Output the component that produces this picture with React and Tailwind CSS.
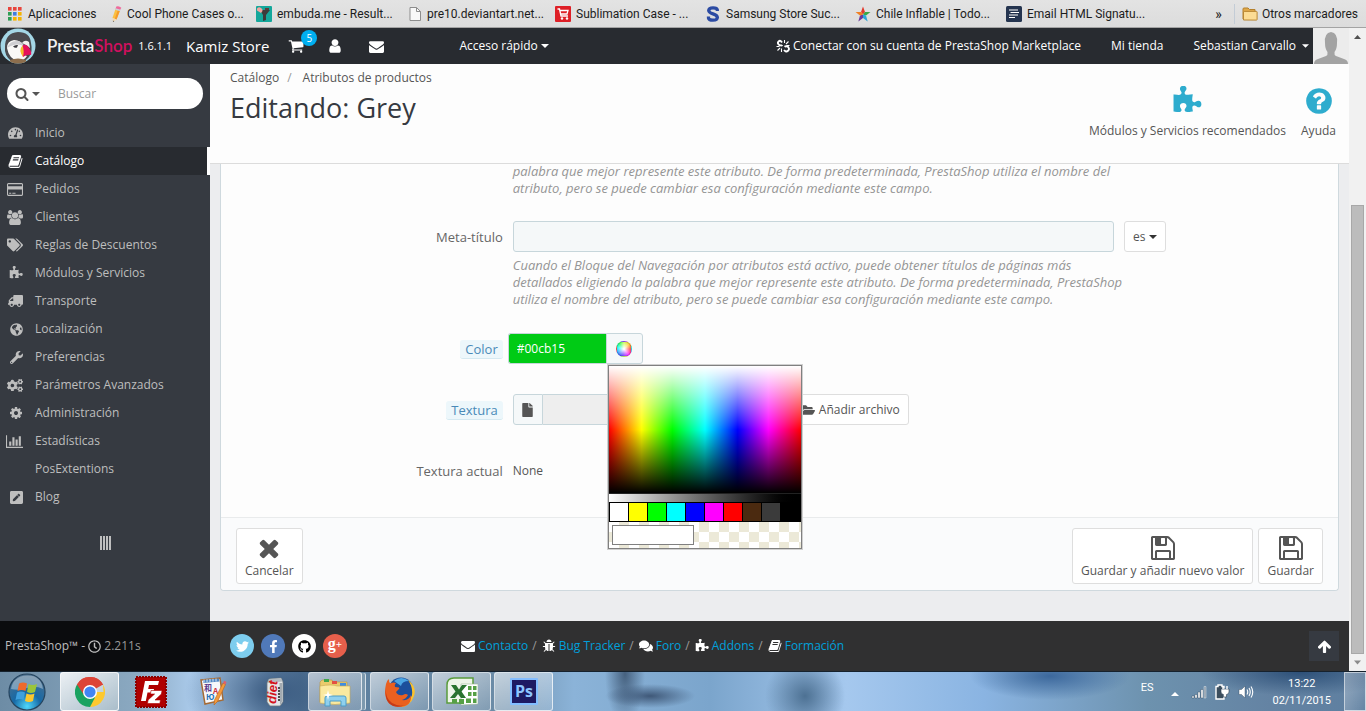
import React, { useState } from "react";
import {
  FaCogs,
  FaComments,
  FaFacebookF,
  FaFile,
  FaFolderOpen,
  FaGithub,
  FaGlobeAmericas,
  FaPenSquare,
  FaRegClock,
  FaTachometerAlt,
  FaTags,
  FaTruck,
  FaTwitter,
  FaWrench,
} from "react-icons/fa";

const glyphs = {
  puzzle: {
    w: 1792,
    d: "M1755 1083q0 81-44.5 135t-123.5 54q-41 0-77.5-17.5t-59-38-56.5-38-71-17.5q-110 0-110 124 0 39 16 115t15 115v5q-22 0-33 1-34 3-97.5 11.5t-115.5 13.5-98 5q-61 0-103-26.5t-42-83.5q0-37 17.5-71t38-56.5 38-59 17.5-77.5q0-79-54-123.5t-135-44.5q-84 0-143 45.5t-59 127.5q0 43 15 83t33.5 64.5 33.5 53 15 50.5q0 45-46 89-37 35-117 35-95 0-245-24-9-2-27.5-4t-27.5-4l-13-2q-1 0-3-1-2 0-2-1v-1024q2 1 17.5 3.5t34 5 21.5 3.5q150 24 245 24 80 0 117-35 46-44 46-89 0-22-15-50.5t-33.5-53-33.5-64.5-15-83q0-82 59-127.5t144-45.5q80 0 134 44.5t54 123.5q0 41-17.5 77.5t-38 59-38 56.5-17.5 71q0 57 42 83.5t103 26.5q64 0 180-15t163-17v2q-1 2-3.5 17.5t-5 34-3.5 21.5q-24 150-24 245 0 80 35 117 44 46 89 46 22 0 50.5-15t53-33.5 64.5-33.5 83-15q82 0 127.5 59t45.5 143z",
  },
  save: {
    w: 1792,
    d: "M512 1536h768v-384h-768v384zm896 0h128v-896q0-14-10-38.5t-20-34.5l-281-281q-10-10-34-20t-39-10v416q0 40-28 68t-68 28h-576q-40 0-68-28t-28-68v-416h-128v1280h128v-416q0-40 28-68t68-28h832q40 0 68 28t28 68v416zm-384-928v-320q0-13-9.5-22.5t-22.5-9.5h-192q-13 0-22.5 9.5t-9.5 22.5v320q0 13 9.5 22.5t22.5 9.5h192q13 0 22.5-9.5t9.5-22.5zm640 32v928q0 40-28 68t-68 28h-1344q-40 0-68-28t-28-68v-1344q0-40 28-68t68-28h928q40 0 88 20t76 48l280 280q28 28 48 76t20 88z",
  },
  chart: {
    w: 2048,
    d: "M640 896v512h-256v-512h256zm384-512v1024h-256v-1024h256zm1024 1152v128h-2048v-1536h128v1408h1920zm-640-896v768h-256v-768h256zm384-384v1152h-256v-1152h256z",
  },
  card: {
    w: 1920,
    d: "M1760 128q66 0 113 47t47 113v1216q0 66-47 113t-113 47h-1600q-66 0-113-47t-47-113v-1216q0-66 47-113t113-47h1600zm-1600 128q-13 0-22.5 9.5t-9.5 22.5v224h1664v-224q0-13-9.5-22.5t-22.5-9.5h-1600zm1600 1280q13 0 22.5-9.5t9.5-22.5v-608h-1664v608q0 13 9.5 22.5t22.5 9.5h1600zm-1504-128v-128h256v128h-256zm384 0v-128h384v128h-384z",
  },
  remove: {
    w: 1792,
    d: "M1490 1322q0 40-28 68l-136 136q-28 28-68 28t-68-28l-294-294-294 294q-28 28-68 28t-68-28l-136-136q-28-28-28-68t28-68l294-294-294-294q-28-28-28-68t28-68l136-136q28-28 68-28t68 28l294 294 294-294q28-28 68-28t68 28l136 136q28 28 28 68t-28 68l-294 294 294 294q28 28 28 68z",
  },
  arrowUp: {
    w: 1792,
    d: "M1675 971q0 51-37 90l-75 75q-38 38-91 38-54 0-90-38l-294-293v704q0 52-37.5 84.5t-90.5 32.5h-128q-53 0-90.5-32.5t-37.5-84.5v-704l-294 293q-36 38-90 38t-90-38l-75-75q-38-38-38-90 0-53 38-91l651-651q35-37 90-37 54 0 91 37l651 651q37 39 37 91z",
  },
  book: {
    w: 1792,
    d: "M1703 478q40 57 18 129l-275 906q-19 64-76.5 107.5t-122.5 43.5h-923q-77 0-148.5-53.5t-99.5-131.5q-24-67-2-127 0-4 3-27t4-37q1-8-3-21.5t-3-19.5q2-11 8-21t16.5-23.5 16.5-23.5q23-38 45-91.5t30-91.5q3-10 .5-30t-.5-28q3-11 17-28t17-23q21-36 42-92t25-90q1-9-2.5-32t.5-28q4-13 22-30.5t22-22.5q19-26 42.5-84.5t27.5-96.5q1-8-3-25.5t-2-26.5q2-8 9-18t18-23 17-21q8-12 16.5-30.5t15-35 16-36 19.5-32 26.5-23.5 36-11.5 47.5 5.5l-1 3q38-9 51-9h761q74 0 114 56t18 130l-274 906q-36 119-71.5 153.5t-128.5 34.5h-869q-27 0-38 15-11 16-1 43 24 70 144 70h923q29 0 56-15.5t35-41.5l300-987q7-22 5-57 38 15 59 43zm-1064 2q-4 13 2 22.5t20 9.5h608q13 0 25.5-9.5t16.5-22.5l21-64q4-13-2-22.5t-20-9.5h-608q-13 0-25.5 9.5t-16.5 22.5zm-83 256q-4 13 2 22.5t20 9.5h608q13 0 25.5-9.5t16.5-22.5l21-64q4-13-2-22.5t-20-9.5h-608q-13 0-25.5 9.5t-16.5 22.5z",
  },
  bug: {
    w: 1792,
    d: "M1696 960q0 26-19 45t-45 19h-224q0 171-67 290l208 209q19 19 19 45t-19 45q-18 19-45 19t-45-19l-198-197q-5 5-15 13t-42 28.5-65 36.5-82 29-97 13v-896h-128v896q-51 0-101.5-13.5t-87-33-66-39-43.5-32.5l-15-14-183 207q-20 21-48 21-24 0-43-16-19-18-20.5-44.5t15.5-46.5l202-227q-58-114-58-274h-224q-26 0-45-19t-19-45 19-45 45-19h224v-294l-173-173q-19-19-19-45t19-45 45-19 45 19l173 173h844l173-173q19-19 45-19t45 19 19 45-19 45l-173 173v294h224q26 0 45 19t19 45zm-480-576h-640q0-133 93.5-226.5t226.5-93.5 226.5 93.5 93.5 226.5z",
  },
  group: {
    w: 1920,
    d: "M593 896q-162 5-265 128h-134q-82 0-138-40.5t-56-118.5q0-353 124-353 6 0 43.5 21t97.5 42.5 119 21.5q67 0 133-23-5 37-5 66 0 159 93 293zm1071 637q0 120-73 189.5t-194 69.5h-874q-121 0-194-69.5t-73-189.5q0-53 3.5-103.5t14-109 26.5-108.5 43-97.5 62-81 85.5-53.5 111.5-20q10 0 43 21.5t73 48 107 48 135 21.5 135-21.5 107-48 73-48 43-21.5q61 0 111.5 20t85.5 53.5 62 81 43 97.5 26.5 108.5 14 109 3.5 103.5zm-1024-1277q0 106-75 181t-181 75-181-75-75-181 75-181 181-75 181 75 75 181zm704 384q0 159-112.5 271.5t-271.5 112.5-271.5-112.5-112.5-271.5 112.5-271.5 271.5-112.5 271.5 112.5 112.5 271.5zm576 225q0 78-56 118.5t-138 40.5h-134q-103-123-265-128 93-134 93-293 0-29-5-66 66 23 133 23 59 0 119-21.5t97.5-42.5 43.5-21q124 0 124 353zm-128-609q0 106-75 181t-181 75-181-75-75-181 75-181 181-75 181 75 75 181z",
  },
  user: {
    w: 1792,
    d: "M1536 1399q0 109-62.5 187t-150.5 78h-854q-88 0-150.5-78t-62.5-187q0-85 8.5-160.5t31.5-152 58.5-131 94-89 134.5-34.5q131 128 313 128t313-128q76 0 134.5 34.5t94 89 58.5 131 31.5 152 8.5 160.5zm-256-887q0 159-112.5 271.5t-271.5 112.5-271.5-112.5-112.5-271.5 112.5-271.5 271.5-112.5 271.5 112.5 112.5 271.5z",
  },
  cart: {
    w: 1792,
    d: "M704 1536q0 52-38 90t-90 38-90-38-38-90 38-90 90-38 90 38 38 90zm896 0q0 52-38 90t-90 38-90-38-38-90 38-90 90-38 90 38 38 90zm128-1088v512q0 24-16.5 42.5t-40.5 21.5l-1044 122q13 60 13 70 0 16-24 64h920q26 0 45 19t19 45-19 45-45 19h-1024q-26 0-45-19t-19-45q0-11 8-31.5t16-36 21.5-40 15.5-29.5l-177-823h-204q-26 0-45-19t-19-45 19-45 45-19h256q16 0 28.5 6.5t19.5 15.5 13 24.5 8 26 5.5 29.5 4.5 26h1201q26 0 45 19t19 45z",
  },
  mail: {
    w: 1792,
    d: "M1792 710v794q0 66-47 113t-113 47h-1472q-66 0-113-47t-47-113v-794q44 49 101 87 362 246 497 345 57 42 92.5 65.5t94.5 48 110 24.5h2q51 0 110-24.5t94.5-48 92.5-65.5q170-123 498-345 57-39 100-87zm0-294q0 79-49 151t-122 123q-376 261-468 325-10 7-42.5 31t-54 38.5-52 32.5-57.5 27-50 9h-2q-23 0-50-9t-57.5-27-52-32.5-54-38.5-42.5-31q-91-64-262-182.5t-205-142.5q-62-42-117-115.5t-55-136.5q0-78 41.5-130t118.5-52h1472q65 0 112.5 47t47.5 113z",
  },
  search: {
    w: 1792,
    d: "M1216 832q0-185-131.5-316.5t-316.5-131.5-316.5 131.5-131.5 316.5 131.5 316.5 316.5 131.5 316.5-131.5 131.5-316.5zm512 832q0 52-38 90t-90 38q-54 0-90-38l-343-342q-179 124-399 124-143 0-273.5-55.5t-225-150-150-225-55.5-273.5 55.5-273.5 150-225 225-150 273.5-55.5 273.5 55.5 225 150 150 225 55.5 273.5q0 220-124 399l343 343q37 37 37 90z",
  },
  help: {
    w: 1792,
    d: "M1024 1376v-192q0-14-9-23t-23-9h-192q-14 0-23 9t-9 23v192q0 14 9 23t23 9h192q14 0 23-9t9-23zm256-672q0-88-55.5-163t-138.5-116-170-41q-243 0-371 213-15 24 8 42l132 100q7 6 19 6 16 0 25-12 53-68 86-92 34-24 86-24 48 0 85.5 26t37.5 59q0 38-20 61t-68 45q-63 28-115.5 86.5t-52.5 125.5v36q0 14 9 23t23 9h192q14 0 23-9t9-23q0-19 21.5-49.5t54.5-49.5q32-18 49-28.5t46-35 44.5-48 28-60.5 12.5-81zm384 192q0 209-103 385.5t-279.5 279.5-385.5 103-385.5-103-279.5-279.5-103-385.5 103-385.5 279.5-279.5 385.5-103 385.5 103 279.5 279.5 103 385.5z",
  },
  cog: {
    w: 1792,
    d: "M1152 896q0-106-75-181t-181-75-181 75-75 181 75 181 181 75 181-75 75-181zm512-109v222q0 12-8 23t-20 13l-185 28q-19 54-39 91 35 50 107 138 10 12 10 25t-9 23q-27 37-99 108t-94 71q-12 0-26-9l-138-108q-44 23-91 38-16 136-29 186-7 28-36 28h-222q-14 0-24.5-8.5t-11.5-21.5l-28-184q-49-16-90-37l-141 107q-10 9-25 9-14 0-25-11-126-114-165-168-7-10-7-23 0-12 8-23 15-21 51-66.5t54-70.5q-27-50-41-99l-183-27q-13-2-21-12.5t-8-23.5v-222q0-12 8-23t19-13l186-28q14-46 39-92-40-57-107-138-10-12-10-24 0-10 9-23 26-36 98.5-107.5t94.5-71.5q13 0 26 10l138 107q44-23 91-38 16-136 29-186 7-28 36-28h222q14 0 24.5 8.5t11.5 21.5l28 184q49 16 90 37l142-107q9-9 24-9 13 0 25 10 129 119 165 170 7 8 7 22 0 12-8 23-15 21-51 66.5t-54 70.5q26 50 41 98l183 28q13 2 21 12.5t8 23.5z",
  },
};

function Glyph({ name, className }) {
  const glyph = glyphs[name];
  return (
    <svg
      viewBox={`0 0 ${glyph.w} 1792`}
      className={`shrink-0 ${className}`}
      fill="currentColor"
      aria-hidden="true"
    >
      <path d={glyph.d} />
    </svg>
  );
}

function Caret({ className = "" }) {
  return (
    <svg viewBox="0 0 8 4" className={`w-2 h-1 shrink-0 ${className}`} fill="currentColor" aria-hidden="true">
      <path d="M0 0h8L4 4z" />
    </svg>
  );
}

/* ---------- Browser bookmarks ---------- */

const appColors = [
  "#e8453c", "#e8453c", "#e8453c",
  "#2f9e55", "#3f7de0", "#f5b400",
  "#2f9e55", "#f5b400", "#f5b400",
];

const bookmarks = [
  {
    label: "Aplicaciones",
    width: "w-[101px]",
    icon: (
      <svg viewBox="0 0 14 14" className="w-[14px] h-[14px] mr-[6px]">
        {appColors.map((color, i) => (
          <rect key={i} x={(i % 3) * 5} y={Math.floor(i / 3) * 5} width="3.6" height="3.6" fill={color} />
        ))}
      </svg>
    ),
  },
  {
    label: "Cool Phone Cases o...",
    width: "w-[147px]",
    icon: (
      <svg viewBox="0 0 16 16" className="w-4 h-4 mr-[2px]">
        <path d="M6.500 3l4.500 1.500-3.500 9L3.500 12z" fill="#fbbf3f" />
        <path d="M9 3.800l2 .7-3.500 9-1.700-.7z" fill="#f59a2a" />
        <path d="M7.300 0.600q2.800-1 5 1.200L11 4.200 6.500 2.800z" fill="#f06a9b" />
        <path d="M6.700 2.200l4.800 1.600-.5 1.500-4.800-1.600z" fill="#c9d1d8" />
        <path d="M3.500 12l4 1.500-3.500 2.500z" fill="#f4d9b0" />
        <path d="M3.900 14.700l1.400.4-1.300.9z" fill="#444" />
      </svg>
    ),
  },
  {
    label: "embuda.me - Result...",
    width: "w-[151px]",
    icon: (
      <svg viewBox="0 0 16 16" className="w-4 h-4 mr-[5px]">
        <rect width="16" height="16" rx="1" fill="#14a79b" />
        <path d="M4 4h10l-4 5v5l-3 1v-6z" fill="#3d3a3a" />
        <path d="M1 2.500q2-2 4-.5 2 1 1.500 3L5 7 1 4.500z" fill="#f2a5a0" />
        <path d="M9 2h4v2H9z" fill="#5b3f3c" />
      </svg>
    ),
  },
  {
    label: "pre10.deviantart.net...",
    width: "w-[148px]",
    icon: (
      <svg viewBox="0 0 12 14" className="w-3 h-[14px] mr-[6px] ml-[2px]">
        <path d="M1 .5h6.500l4 4v9H1z" fill="#f8f8f8" stroke="#8d8d8d" />
        <path d="M7.500.5v4h4" fill="none" stroke="#8d8d8d" />
      </svg>
    ),
  },
  {
    label: "Sublimation Case - ...",
    width: "w-[151px]",
    icon: (
      <svg viewBox="0 0 16 16" className="w-4 h-4 mr-[5px]">
        <rect width="16" height="16" rx="1" fill="#de1f26" />
        <path d="M2.500 3h2l1.500 7h7M5 4.500h8L12 8H6" fill="none" stroke="#fff" strokeWidth="1.300" />
        <circle cx="7" cy="12.500" r="1.200" fill="#fff" />
        <circle cx="12" cy="12.500" r="1.200" fill="#fff" />
      </svg>
    ),
  },
  {
    label: "Samsung Store Suc...",
    width: "w-[149px]",
    icon: (
      <svg viewBox="0 0 14 16" className="w-[14px] h-4 mr-[6px]">
        <path
          d="M11.300 5V3.800Q11 1.800 7 1.800T2.700 4.500Q2.800 6.500 7 7.800T11.400 11.500Q11.200 14.200 7 14.200T2.500 12V10.500"
          fill="none"
          stroke="#2c4ba3"
          strokeWidth="3.300"
        />
      </svg>
    ),
  },
  {
    label: "Chile Inflable | Todo...",
    width: "w-[151px]",
    icon: (
      <svg viewBox="0 0 16 16" className="w-4 h-4 mr-[5px]">
        <path d="M8 8.500L6 6 8 .5 10 6z" fill="#e23b2e" />
        <path d="M8 8.500L10 6H15.500L11 9.500z" fill="#39a94a" />
        <path d="M8 8.500l3 1 1.700 6L8 12z" fill="#2aa7d8" />
        <path d="M8 8.500V12l-4.700 3.500 1.700-6z" fill="#6a3a9b" />
        <path d="M8 8.500L5 9.500.5 6H6z" fill="#f07f23" />
      </svg>
    ),
  },
  {
    label: "Email HTML Signatu...",
    width: "w-[150px]",
    icon: (
      <svg viewBox="0 0 16 16" className="w-4 h-4 mr-[5px]">
        <rect width="16" height="16" rx="1.500" fill="#24344f" />
        <path d="M3 4h9M4.500 6.500h8.500M3 9h9M3 11.500h6" stroke="#fff" strokeWidth="1.200" />
      </svg>
    ),
  },
];

function BookmarksBar() {
  return (
    <nav
      aria-label="Marcadores"
      className="h-7 shrink-0 flex items-center bg-linear-to-b from-[#e3e3e3] to-[#dcdcdc] border-b border-[#a3a3a3] pl-2 pr-2 text-[12px] text-[#1c1c1c] font-[Roboto,sans-serif] whitespace-nowrap overflow-hidden"
    >
      {bookmarks.map((item) => (
        <a key={item.label} href="#" className={`flex items-center shrink-0 ${item.width}`}>
          {item.icon}
          {item.label}
        </a>
      ))}
      <button aria-label="Más marcadores" className="ml-auto px-3 text-[14px] leading-none">
        »
      </button>
      <a href="#" className="flex items-center gap-1 border-l border-[#c3ccd6] pl-[7px] h-5">
        <svg viewBox="0 0 16 14" className="w-4 h-[14px]">
          <path d="M1 12V2q0-1 1-1h4l1.500 1.500H13V12z" fill="#e0a94a" stroke="#b4802c" />
          <path d="M1.500 13V5q0-.6.6-.6H14.500q.6 0 .6.600v7.500q0 .6-.6.600z" fill="#fcdc94" stroke="#b98733" />
        </svg>
        Otros marcadores
      </a>
    </nav>
  );
}

/* ---------- PrestaShop header ---------- */

function Puffin() {
  return (
    <svg viewBox="0 0 36 36" className="w-9 h-9 shrink-0">
      <defs>
        <clipPath id="puffin">
          <circle cx="18" cy="18" r="17.500" />
        </clipPath>
      </defs>
      <circle cx="18" cy="18" r="17.500" fill="#a4d7e6" />
      <g clipPath="url(#puffin)">
        <path d="M5 19Q5 5 18 4q12 0 13 11 2 9-2 14l-4 4H11Q4 27 5 19z" fill="#4b4b4f" />
        <path d="M7 20q0-7 7-8 7 0 9 6l-1 8 5 2q-3 5-9 5-9-2-11-13z" fill="#faf9f7" />
        <path d="M22 15q3-4 7-1l1 6-4-3z" fill="#f3f1ee" />
        <path d="M7 20q3-8 11-7 5 1 6 5-8-4-17 2z" fill="#cfcfd2" />
        <path d="M13 18.500q2-2 5-1.500l-1 2.500q-2 1-4-1z" fill="#3b3b3f" />
        <path d="M23 17q4-1 6 3 3 4 2 7-4-1-8 2-3-6 0-12z" fill="#e5115b" />
        <path d="M22.500 17.500q2 5 .5 11-5-6-.5-11z" fill="#f4bd2a" />
        <path d="M10 32q8-3 16 0v4H10z" fill="#8d6e4d" />
      </g>
    </svg>
  );
}

function TopBar() {
  return (
    <header className="h-9 shrink-0 flex items-center bg-[#282b30] text-white text-[12px] whitespace-nowrap">
      <a href="#" className="flex items-center">
        <Puffin />
        <span className="ml-[11px] text-[17px] leading-5 font-[Lato,sans-serif] font-semibold text-[#f2f2f2]">
          Presta<span className="text-[#d0105f]">Shop</span>
        </span>
        <span className="ml-[6px] text-[11px]">1.6.1.1</span>
      </a>
      <a href="#" className="ml-[14px] text-[15px] leading-5">
        Kamiz Store
      </a>
      <button aria-label="Pedidos" className="relative ml-[19px]">
        <Glyph name="cart" className="w-4 h-4" />
        <span className="absolute -top-2 left-[13px] w-4 h-4 rounded-full bg-[#00aff0] text-[10px] leading-4 text-center">
          5
        </span>
      </button>
      <button aria-label="Clientes" className="ml-[23px]">
        <Glyph name="user" className="w-4 h-4" />
      </button>
      <button aria-label="Mensajes" className="ml-[26px]">
        <Glyph name="mail" className="w-[15px] h-[15px]" />
      </button>
      <button className="ml-[75px] flex items-center gap-[3px]">
        Acceso rápido <Caret />
      </button>

      <nav className="ml-auto flex items-center h-full">
        <a href="#" className="flex items-center gap-[3px]">
          <svg viewBox="0 0 14 14" className="w-[14px] h-[14px]" fill="none" stroke="#fff">
            <path
              d="M6 3.500Q4.500.8 2.600 2.400T3.600 6.200Q5.600 7 6.400 6M8 11q2 2.500 4 .8t0-4q-2-1.200-3.500 0"
              strokeWidth="1.900"
            />
            <path d="M8.500 4V1M10 5l2.500-2.500M10.500 6.500h3M5.500 9.500v3.500M4 9L1.500 11.500M3.500 7.500H.5" strokeWidth="1.100" />
          </svg>
          Conectar con su cuenta de PrestaShop Marketplace
        </a>
        <a href="#" className="ml-[30px]">
          Mi tienda
        </a>
        <button className="ml-[30px] mr-1 flex items-center gap-[6px]">
          Sebastian Carvallo <Caret className="w-[7px]" />
        </button>
        <svg viewBox="0 0 36 36" className="w-9 h-9">
          <rect width="36" height="36" fill="#ececec" />
          <path
            d="M1 36q0-4 4-5l8-3q2-1 1.500-4Q12 21 12 15q-1-10 6-11 7 1 6 11 0 6-2.500 9-.5 3 1.500 4l8 3q4 1 4 5z"
            fill="#a3a3a3"
          />
        </svg>
      </nav>
    </header>
  );
}

/* ---------- Sidebar ---------- */

const menu = [
  { label: "Inicio", icon: <FaTachometerAlt className="w-[15px] h-[14px]" /> },
  { label: "Catálogo", icon: <Glyph name="book" className="w-[15px] h-[15px]" />, active: true },
  { label: "Pedidos", icon: <Glyph name="card" className="w-4 h-[15px]" /> },
  { label: "Clientes", icon: <Glyph name="group" className="w-4 h-[15px]" /> },
  { label: "Reglas de Descuentos", icon: <FaTags className="w-4 h-4" /> },
  { label: "Módulos y Servicios", icon: <Glyph name="puzzle" className="w-[14px] h-[14px]" /> },
  { label: "Transporte", icon: <FaTruck className="w-[15px] h-[14px] -scale-x-100" /> },
  { label: "Localización", icon: <FaGlobeAmericas className="w-[13px] h-[13px]" /> },
  { label: "Preferencias", icon: <FaWrench className="w-[13px] h-[13px]" /> },
  { label: "Parámetros Avanzados", icon: <FaCogs className="w-4 h-[15px]" /> },
  { label: "Administración", icon: <Glyph name="cog" className="w-[14px] h-[14px]" /> },
  { label: "Estadísticas", icon: <Glyph name="chart" className="w-[17px] h-[15px]" /> },
  { label: "PosExtentions", icon: null },
  { label: "Blog", icon: <FaPenSquare className="w-[13px] h-[15px]" /> },
];

function Sidebar() {
  return (
    <aside className="w-[210px] shrink-0 flex flex-col bg-[#363a41] text-[#bebebe] text-[12px]">
      <form className="mx-[7px] mt-[14px] mb-[10px] h-[31px] flex items-center rounded-full bg-white text-[#555]">
        <button type="button" aria-label="Buscar en" className="flex items-center gap-[3px] ml-2">
          <Glyph name="search" className="w-[14px] h-[14px]" />
          <Caret />
        </button>
        <input
          aria-label="Buscar"
          placeholder="Buscar"
          className="ml-[18px] w-[130px] bg-transparent outline-none placeholder:text-[#999]"
        />
      </form>
      <nav>
        <ul>
          {menu.map((item) => (
            <li key={item.label}>
              <a
                href="#"
                className={`h-7 flex items-center ${
                  item.active ? "bg-[#282b30] text-white border-r-[3px] border-white" : ""
                }`}
              >
                <span className="w-[23px] flex justify-end mr-3">{item.icon}</span>
                {item.label}
              </a>
            </li>
          ))}
        </ul>
      </nav>
      <button aria-label="Contraer menú" className="mt-[25px] mx-auto flex gap-px">
        {[0, 1, 2, 3].map((bar) => (
          <span key={bar} className="w-[2px] h-[14px] bg-[#bebebe]" />
        ))}
      </button>
      <div className="mt-auto h-[50px] flex items-center pl-[5px] bg-[#0b0c0e]">
        PrestaShop™ -&nbsp;
        <FaRegClock className="w-[13px] h-[13px] mr-[3px]" />
        <span className="text-[#999]">2.211s</span>
      </div>
    </aside>
  );
}

/* ---------- Page heading ---------- */

function PageHead() {
  return (
    <div className="h-[100px] shrink-0 flex justify-between bg-[#fdfdfd] border-b border-[#dcdcdc] pl-5 pr-[13px]">
      <div>
        <ol className="flex pt-[5px] text-[12px] leading-[17px] text-[#555]">
          <li>
            <a href="#">Catálogo</a>
            <span className="mx-2 text-[#999]">/</span>
          </li>
          <li>
            <a href="#" className="ml-[3px]">Atributos de productos</a>
          </li>
        </ol>
        <h1 className="mt-[4px] text-[27px] leading-9 text-[#363a41]">Editando: Grey</h1>
      </div>
      <div className="flex gap-[15px] pt-[22px] text-[12px] text-[#555]">
        <a href="#" className="flex flex-col items-center gap-[6px]">
          <Glyph name="puzzle" className="w-[30px] h-[30px] text-[#2eacce]" />
          Módulos y Servicios recomendados
        </a>
        <a href="#" className="flex flex-col items-center gap-[6px]">
          <Glyph name="help" className="w-[30px] h-[30px] text-[#2eacce]" />
          Ayuda
        </a>
      </div>
    </div>
  );
}

/* ---------- Form ---------- */

const swatches = [
  "#ffffff", "#ffff00", "#00ff00", "#00ffff", "#0000ff",
  "#ff00ff", "#ff0000", "#4b2a10", "#3b3b3b", "#000000",
];

function ColorPicker() {
  return (
    <div className="absolute left-[100px] top-8 z-10 w-[194px] border border-[#808080] shadow-[0_0_0_1px_#d0d0d0] bg-white">
      <div className="h-[127px] bg-[linear-gradient(to_bottom,#fff_0%,transparent_50%,#000_100%),linear-gradient(to_right,#f00_0%,#ff0_17%,#0f0_33%,#0ff_50%,#00f_67%,#f0f_83%,#f00_100%)]" />
      <div className="h-[9px] border-t border-[#222] bg-linear-to-r from-white to-black" />
      <div className="flex bg-black p-px h-5">
        {swatches.map((color) => (
          <button
            key={color}
            type="button"
            aria-label={color}
            className="flex-1 border-r border-black"
            style={{ backgroundColor: color }}
          />
        ))}
      </div>
      <div className="h-[26px] pt-[3px] pl-[3px] bg-[repeating-conic-gradient(#ece9d8_0_25%,#fff_0_50%)] bg-size-[20px_20px]">
        <input
          aria-label="Color seleccionado"
          className="block w-[82px] h-5 border border-[#808080] bg-white"
        />
      </div>
    </div>
  );
}

function FormRow({ label, htmlFor, hint, className, children }) {
  return (
    <div className={`flex ${className}`}>
      <div className="w-1/4 shrink-0 pr-[5px] pt-[2px] h-[31px] flex items-center justify-end text-[13px] text-[#666]">
        <label
          htmlFor={htmlFor}
          className={
            hint ? "px-[5px] leading-[18px] rounded-[3px] bg-[#edf7fb] border-b border-[#d5e9f1] text-[#4a8ab8]" : ""
          }
        >
          {label}
        </label>
      </div>
      <div className="w-3/4">{children}</div>
    </div>
  );
}

function Help({ lines }) {
  return (
    <p className="italic text-[13px] leading-[17px] text-[#959595] whitespace-nowrap">
      {lines.map((line) => (
        <span key={line} className="block">
          {line}
        </span>
      ))}
    </p>
  );
}

function FooterButton({ icon, label }) {
  return (
    <button
      type="button"
      className="h-14 px-2 pb-[3px] flex flex-col items-center justify-end rounded-[3px] border border-[#dedede] bg-white text-[12px] leading-[18px]"
    >
      <Glyph name={icon} className="w-7 h-7" />
      {label}
    </button>
  );
}

function AttributeForm() {
  const [color, setColor] = useState("#00cb15");

  return (
    <form className="mx-[10px] border-x border-b border-[#cfd9de] rounded-b-[4px] bg-[#fdfdfd] text-[#555]">
      <div className="px-[15px] pb-[31px]">
        <div className="flex -mt-px">
          <div className="w-1/4" />
          <div className="w-3/4 pl-[5px]">
            <Help
              lines={[
                "palabra que mejor represente este atributo. De forma predeterminada, PrestaShop utiliza el nombre del",
                "atributo, pero se puede cambiar esa configuración mediante este campo.",
              ]}
            />
          </div>
        </div>

        <FormRow label="Meta-título" htmlFor="meta" className="mt-6">
          <div className="flex">
            <div className="w-3/4 pl-[5px] pr-[5px]">
              <input
                id="meta"
                className="block w-full h-[31px] rounded-[3px] border border-[#c7d6db] bg-[#f5f8f9] px-2 text-[12px]"
              />
            </div>
            <button
              type="button"
              className="ml-[5px] h-[31px] w-[42px] flex items-center justify-center gap-1 rounded-[3px] border border-[#dedede] bg-white text-[12px]"
            >
              es <Caret className="text-[#333]" />
            </button>
          </div>
          <div className="pl-[5px] mt-[5px]">
            <Help
              lines={[
                "Cuando el Bloque del Navegación por atributos está activo, puede obtener títulos de páginas más",
                "detallados eligiendo la palabra que mejor represente este atributo. De forma predeterminada, PrestaShop",
                "utiliza el nombre del atributo, pero se puede cambiar esa configuración mediante este campo.",
              ]}
            />
          </div>
        </FormRow>

        <FormRow label="Color" htmlFor="color" hint className="mt-[25px]">
          <div className="relative flex w-[135px] h-[31px]">
            <input
              id="color"
              value={color}
              onChange={(e) => setColor(e.target.value)}
              style={{ backgroundColor: color }}
              className="w-[98px] rounded-l-[3px] border border-r-0 border-[#c7d6db] pl-2 text-[12px] text-white"
            />
            <button
              type="button"
              aria-label="Elegir color"
              className="flex-1 flex items-center justify-center rounded-r-[3px] border border-[#c7d6db] bg-[#f5f8f9]"
            >
              <span className="w-4 h-4 rounded-full border border-black/15 bg-[radial-gradient(circle,#fff_5%,transparent_75%),conic-gradient(from_0deg,#cf5,#fc3_45deg,#f33_90deg,#f3f_140deg,#63f_190deg,#39f_240deg,#0ff_280deg,#3f6_320deg,#cf5)]" />
            </button>
            <ColorPicker />
          </div>
        </FormRow>

        <FormRow label="Textura" htmlFor="texture" hint className="mt-[30px]">
          <div className="ml-[5px] flex w-[396px] h-[31px]">
            <span className="w-[30px] flex items-center justify-center rounded-l-[3px] border border-[#c7d6db] bg-[#f5f8f9]">
              <FaFile className="w-[13px] h-[14px]" />
            </span>
            <input
              id="texture"
              readOnly
              className="flex-1 min-w-0 border-y border-[#c7d6db] bg-[#eee] px-2 text-[12px]"
            />
            <button
              type="button"
              className="w-[116px] flex items-center justify-end gap-1 pr-2 rounded-r-[3px] border border-[#dedede] bg-white text-[12px]"
            >
              <FaFolderOpen className="w-[14px] h-[14px]" />
              Añadir archivo
            </button>
          </div>
        </FormRow>

        <FormRow label="Textura actual" className="mt-[30px]">
          <p className="pl-[5px] text-[12px] leading-[31px]">None</p>
        </FormRow>
      </div>

      <div className="flex items-start gap-[5px] border-t border-[#e9ebec] bg-[#fafbfc] rounded-b-[4px] pt-[10px] pb-[6px] px-[15px]">
        <FooterButton icon="remove" label="Cancelar" />
        <div className="ml-auto" />
        <FooterButton icon="save" label="Guardar y añadir nuevo valor" />
        <FooterButton icon="save" label="Guardar" />
      </div>
    </form>
  );
}

/* ---------- Footer ---------- */

const footerLinks = [
  { label: "Contacto", icon: <Glyph name="mail" className="w-[14px] h-[14px]" /> },
  { label: "Bug Tracker", icon: <Glyph name="bug" className="w-[14px] h-[14px]" /> },
  { label: "Foro", icon: <FaComments className="w-[14px] h-[14px]" /> },
  { label: "Addons", icon: <Glyph name="puzzle" className="w-[14px] h-[14px]" /> },
  { label: "Formación", icon: <Glyph name="book" className="w-[14px] h-[14px]" /> },
];

function Footer() {
  return (
    <footer className="mt-auto h-[50px] shrink-0 flex items-center bg-[#303031] pl-5 pr-[10px] text-[12px] text-[#999] whitespace-nowrap">
      <div className="flex gap-[7px]">
        <a href="#" aria-label="Twitter" className="w-6 h-6 rounded-full flex items-center justify-center bg-[#7dcdee] text-white">
          <FaTwitter className="w-[13px] h-[13px]" />
        </a>
        <a href="#" aria-label="Facebook" className="w-6 h-6 rounded-full flex items-center justify-center bg-[#5079b9] text-white">
          <FaFacebookF className="w-[13px] h-[13px]" />
        </a>
        <a href="#" aria-label="GitHub" className="w-6 h-6 rounded-full flex items-center justify-center bg-white text-black">
          <FaGithub className="w-[13px] h-[13px]" />
        </a>
        <a
          href="#"
          aria-label="Google Plus"
          className="w-6 h-6 rounded-full flex items-center justify-center bg-[#e65f4b] text-white font-['Liberation_Serif',serif] font-bold text-[16px] leading-none pb-1"
        >
          g<span className="text-[11px]">+</span>
        </a>
      </div>
      <ul className="ml-[114px] flex">
        {footerLinks.map((link, index) => (
          <li key={link.label} className="flex items-center">
            <span className="text-white mr-[3px]">{link.icon}</span>
            <a href="#" className="text-[#00a0dc]">
              {link.label}
            </a>
            {index < footerLinks.length - 1 && <span className="ml-1 mr-[5px]">/</span>}
          </li>
        ))}
      </ul>
      <button aria-label="Volver arriba" className="ml-auto w-[30px] h-[30px] flex items-center justify-center bg-[#363a41] text-white">
        <Glyph name="arrowUp" className="w-[15px] h-[15px]" />
      </button>
    </footer>
  );
}

function Scrollbar() {
  return (
    <div className="w-[17px] shrink-0 flex flex-col items-center bg-[#f1f1f1]">
      <svg viewBox="0 0 17 17" className="w-[17px] h-[17px]">
        <path d="M5 11h7L8.500 7z" fill="#505050" />
      </svg>
      <div className="flex-1 w-full flex flex-col px-[2px]">
        <div className="flex-1" />
        <div className="basis-[73.7%] border border-[#a8a8a8] bg-[#bcbcbc]" />
      </div>
      <svg viewBox="0 0 17 17" className="w-[17px] h-[17px]">
        <path d="M5 6.500h7L8.500 10.500z" fill="#8b8b8b" />
      </svg>
    </div>
  );
}

/* ---------- Windows taskbar ---------- */

function StartOrb() {
  return (
    <svg viewBox="0 0 40 40" className="w-10 h-10">
      <defs>
        <radialGradient id="orb" cx="50%" cy="90%" r="85%">
          <stop offset="0" stopColor="#4fd8fb" />
          <stop offset=".45" stopColor="#1769a6" />
          <stop offset="1" stopColor="#4b6f8e" />
        </radialGradient>
      </defs>
      <circle cx="20" cy="20" r="18" fill="url(#orb)" stroke="#26445e" strokeWidth="1.200" />
      <path d="M4 17Q6 4 20 3.500T36 17q-8-4-16-1T4 17z" fill="#fff" opacity=".35" />
      <path d="M12 11.500q4-2 8 0L18.500 19q-4-2-8 0z" fill="#ee6a2c" />
      <path d="M21.500 12q4 2 8.500 0L28 20q-4 2-8 0z" fill="#9bc53b" />
      <path d="M10 20.500q4-2 8 0L16.500 28q-4-2-8 0z" fill="#3fa0de" />
      <path d="M19.500 21.500q4 2 8 0L26 29q-4 2-8 0z" fill="#fbc72f" />
    </svg>
  );
}

function ChromeIcon() {
  return (
    <svg viewBox="0 0 30 30" className="w-[30px] h-[30px]">
      <path d="M15 15L2 7.500A15 15 0 0 1 28 7.500z" fill="#dc4437" />
      <path d="M15 15H28.500L28 7.500A15 15 0 0 1 15 30z" fill="#fdc92f" />
      <path d="M15 15L20 20.500 15 30A15 15 0 0 1 2 7.500z" fill="#1aa260" />
      <path d="M15 8H28.200A15 15 0 0 0 2 7.500L9 18z" fill="#dc4437" />
      <circle cx="15" cy="15" r="7" fill="#fff" />
      <circle cx="15" cy="15" r="5.600" fill="#4285f4" />
    </svg>
  );
}

function FileZillaIcon() {
  return (
    <svg viewBox="0 0 32 32" className="w-8 h-8">
      <rect x="1" y="1" width="30" height="30" fill="#b00000" stroke="#8c0000" strokeDasharray="2 1" strokeWidth="2" />
      <path d="M6 25L10 5H24L23 9H14L13.200 13H19L18.300 16.500H12.500L10.800 25z" fill="#fff" />
      <path d="M16 14.500h11l-.6 3.500-6.400 6h5.500l-.7 3.500H12.500l.6-3.500 6.500-6H15.500z" fill="#fff" stroke="#b00000" strokeWidth=".6" />
    </svg>
  );
}

function NotesIcon() {
  return (
    <svg viewBox="0 0 28 32" className="w-7 h-8">
      <path d="M2 4l19-2 3 22-18 4z" fill="#f6f8fb" stroke="#a56b35" strokeWidth="1.500" />
      <path d="M4 4l16-1.500.4 3L4.400 7z" fill="#4f87c4" />
      <path d="M5 3.500v3M8 3.200v3M11 3v3M14 2.700v3M17 2.500v3" stroke="#fff" strokeWidth=".8" />
      <g fontFamily="Noto Sans CJK JP, sans-serif" fontWeight="700">
        <text x="5" y="15" fontSize="8" fill="#5a3a8c">和</text>
        <text x="7" y="24" fontSize="8" fill="#2472b8">Ю</text>
        <text x="14" y="18" fontSize="8" fill="#cc3344">A</text>
      </g>
      <path d="M24 7l2.500 1.500-8 17-3.500 3.500.5-5z" fill="#f39a3c" stroke="#b8621b" strokeWidth=".6" />
      <path d="M24 7l2.500 1.500 1-2.500-2.200-1.200z" fill="#e2606a" />
    </svg>
  );
}

function SodaIcon() {
  return (
    <svg viewBox="0 0 20 30" className="w-5 h-[30px]">
      <path d="M4 2l12-1 2 4v20l-3 4H5l-3-4V6z" fill="#e4e6e8" stroke="#6d7880" strokeWidth=".8" />
      <path d="M4 2l12-1 1.500 3.500L2.500 6z" fill="#b3bac0" />
      <path d="M14.500 6H17v19l-2 3z" fill="#a2aab1" />
      <text transform="translate(11 27) rotate(-86)" fontSize="13" fontWeight="700" fontStyle="italic" fontFamily="Liberation Sans, sans-serif" fill="#d3141c">
        diet
      </text>
      <path d="M14 10v15" stroke="#3c3c3c" strokeWidth="1.800" strokeDasharray="2 1" />
    </svg>
  );
}

function ExplorerIcon() {
  return (
    <svg viewBox="0 0 32 30" className="w-8 h-[30px]">
      <path d="M3 3h10l1 2h14v20H1V5z" fill="#e9cb6c" stroke="#b9953e" strokeWidth=".6" />
      <path d="M5 2h5v3H5z" fill="#3fa64b" />
      <path d="M13 4h5v3h-5z" fill="#e44f42" />
      <path d="M21 6h6v3h-6z" fill="#3f8ce0" />
      <path d="M1 9q12-2 17 0h13v17q-15 3-30 0z" fill="#fae9a0" stroke="#c8a750" strokeWidth=".6" />
      <path d="M6 29V21q0-2 2-2h17q2 0 2 2v8h-5v-5H11v5z" fill="#8fd0ee" stroke="#4c9cc7" />
      <path d="M9 13l1 4 4 1-4 1-1 4-1-4-4-1 4-1z" fill="#fff" />
    </svg>
  );
}

function FirefoxIcon() {
  return (
    <svg viewBox="0 0 32 32" className="w-8 h-8">
      <circle cx="17" cy="14" r="12.500" fill="#1c4f9c" />
      <path d="M10 5q7-6 15 0-7 0-8 5z" fill="#4ba5e4" />
      <path d="M24 4q9 7 6 16-4 11-14 11 10-3 12-12 1-8-4-15z" fill="#fbc22d" />
      <path d="M2 8q1-4 3-5-.5 3 1.500 4.500Q9 6 12 7q-2 2-1 4l4 .5q1 1-1 2.500l-2 2q2 4 7 3 3-2 5 0-2 4-6 5 7 1 9-5 1 12-12 12Q2 30 1 17q0-5 1-9z" fill="#ea6020" />
      <path d="M2 12q-1 10 6 15 7 4 13 2-6 3-12 1Q0 26 2 12z" fill="#c63a17" />
    </svg>
  );
}

function ExcelIcon() {
  return (
    <svg viewBox="0 0 32 30" className="w-8 h-[30px]">
      <path d="M1 26V8q0-7 7-7h19v25z" fill="#eef5e9" stroke="#5a9c3c" strokeWidth="1.500" />
      <path d="M15 7h17v20l-17 1z" fill="#fff" stroke="#9cb594" strokeWidth=".6" />
      <path d="M22 9h3.500v4H22zM27 9h3.500v4H27zM22 15h3.500v4H22zM27 15h3.500v4H27zM6 22h5v4H6zM13 22h5v5h-5zM20 21.500h5V26h-5zM27 21.500h3.500V26H27z" fill="#55a044" />
      <path d="M5 8h5l3 4.500L16 8h5l-5.500 6.500L20 21h-5l-3-4-3 4H4l5.500-6.500z" fill="#2a7330" />
    </svg>
  );
}

function PhotoshopIcon() {
  return (
    <svg viewBox="0 0 28 27" className="w-7 h-[27px]">
      <rect width="28" height="27" rx="1" fill="#82bdff" />
      <rect x="2" y="2" width="24" height="23" fill="#1d1a63" />
      <text x="14" y="19" textAnchor="middle" fontSize="16" fontWeight="700" fontFamily="Open Sans, sans-serif" fill="#8cc4ff">
        Ps
      </text>
    </svg>
  );
}

const tasks = [
  { label: "Chrome", icon: <ChromeIcon />, style: "w-[59px] ml-[13px] border border-white/80 bg-linear-to-br from-white/85 to-[#a9bdca]" },
  { label: "FileZilla", icon: <FileZillaIcon />, style: "w-[62px] ml-[1px]" },
  { label: "Notas", icon: <NotesIcon />, style: "w-[62px]" },
  { label: "Diet", icon: <SodaIcon />, style: "w-[62px]" },
  {
    label: "Explorador",
    icon: <ExplorerIcon />,
    style: "w-[54px] ml-[2px] border border-white/60 bg-linear-to-br from-white/60 to-white/20 shadow-[4px_0_0_-1px_#7d99ae,5px_0_0_-1px_#d5e0e8]",
  },
  { label: "Firefox", icon: <FirefoxIcon />, style: "w-[59px] ml-2 border border-white/60 bg-linear-to-br from-white/60 to-white/15" },
  { label: "Excel", icon: <ExcelIcon />, style: "w-[59px] ml-[3px] border border-white/60 bg-linear-to-br from-white/60 to-white/15" },
  { label: "Photoshop", icon: <PhotoshopIcon />, style: "w-[59px] ml-[3px] border border-white/60 bg-linear-to-br from-white/60 to-white/15" },
];

function Taskbar() {
  return (
    <div className="h-10 shrink-0 flex items-stretch border-t border-[#16222e] text-white bg-[radial-gradient(ellipse_45px_12px_at_650px_24px,#3f5878,transparent),radial-gradient(ellipse_20px_50px_at_625px_2px,#46617f,transparent),radial-gradient(ellipse_40px_40px_at_805px_24px,#4d7193,transparent),radial-gradient(ellipse_90px_60px_at_275px_20px,#39597f,transparent),radial-gradient(ellipse_80px_24px_at_1050px_4px,#3c689c,transparent),radial-gradient(ellipse_100px_24px_at_1300px_0px,#2d5078,transparent),linear-gradient(to_right,#6d8ca5,#8ba9c1_10%,#a9c9e9_14%,#a3c4e4_18%,#5a7d9d_22%,#6b8ba6_36%,#8bb3d8_42%,#7ba5cc_52%,#a5c8ee_62%,#8ab4e2_72%,#6d92ae_84%,#6483a3_93%,#5e7fa0)] overflow-hidden">
      <button aria-label="Inicio" className="ml-[7px] flex items-center">
        <StartOrb />
      </button>
      {tasks.map((task) => (
        <button
          key={task.label}
          aria-label={task.label}
          className={`h-[39px] shrink-0 flex items-center justify-center rounded-[3px] ${task.style}`}
        >
          {task.icon}
        </button>
      ))}
      <div className="ml-auto flex items-center text-[11px] font-[Roboto,sans-serif]">
        <span className="mr-[18px] pb-[6px]">ES</span>
        <svg viewBox="0 0 8 4" className="w-2 h-1 mr-3 mt-1">
          <path d="M0 4h8L4 0z" fill="#fff" />
        </svg>
        <svg viewBox="0 0 16 14" className="w-4 h-[14px] mr-2">
          <path d="M1 11h2v2H1zM4 9.500h2V13H4zM7 7h2v6H7zM10 4.500h2V13h-2z" fill="#fff" stroke="#2e4256" strokeWidth=".4" />
          <path d="M13 1.500h2V13h-2z" fill="#8a99a8" stroke="#dde4ea" strokeWidth=".5" />
        </svg>
        <svg viewBox="0 0 15 16" className="w-[15px] h-4 mr-2">
          <path d="M3 2.500V1h4v1.500h2V15H1V2.500z" fill="#3b4e5e" stroke="#fff" strokeWidth="1.400" />
          <path d="M6 5h8v3q0 2-2.500 2.500V13H8.500v-2.500Q6 10 6 8z" fill="#fff" stroke="#2e4256" strokeWidth=".6" />
          <path d="M8 2v3M12 2v3" stroke="#fff" strokeWidth="1.400" />
        </svg>
        <svg viewBox="0 0 16 14" className="w-4 h-[14px] mr-[18px]">
          <path d="M1 4.500h2.500L7 1v12L3.500 9.500H1z" fill="#fff" stroke="#2e4256" strokeWidth=".4" />
          <path d="M9 4.500q1.500 2.500 0 5M11 3q2.500 4 0 8M13 1.500q3.500 5.500 0 11" fill="none" stroke="#fff" strokeWidth="1.100" />
        </svg>
        <time className="text-center leading-[17px] mr-[13px]">
          13:22
          <br />
          02/11/2015
        </time>
        <button aria-label="Mostrar escritorio" className="w-[22px] h-full border border-white/60 bg-linear-to-br from-white/35 to-white/5" />
      </div>
    </div>
  );
}

export default function App() {
  return (
    <div className="h-screen flex flex-col overflow-hidden font-['Open_Sans',sans-serif] bg-[#ecedef]">
      <BookmarksBar />
      <div className="flex-1 min-h-0 flex">
        <div className="flex-1 min-w-0 flex flex-col">
          <TopBar />
          <div className="flex-1 min-h-0 flex">
            <Sidebar />
            <main className="flex-1 min-w-0 flex flex-col">
              <PageHead />
              <AttributeForm />
              <Footer />
            </main>
          </div>
        </div>
        <Scrollbar />
      </div>
      <Taskbar />
    </div>
  );
}
